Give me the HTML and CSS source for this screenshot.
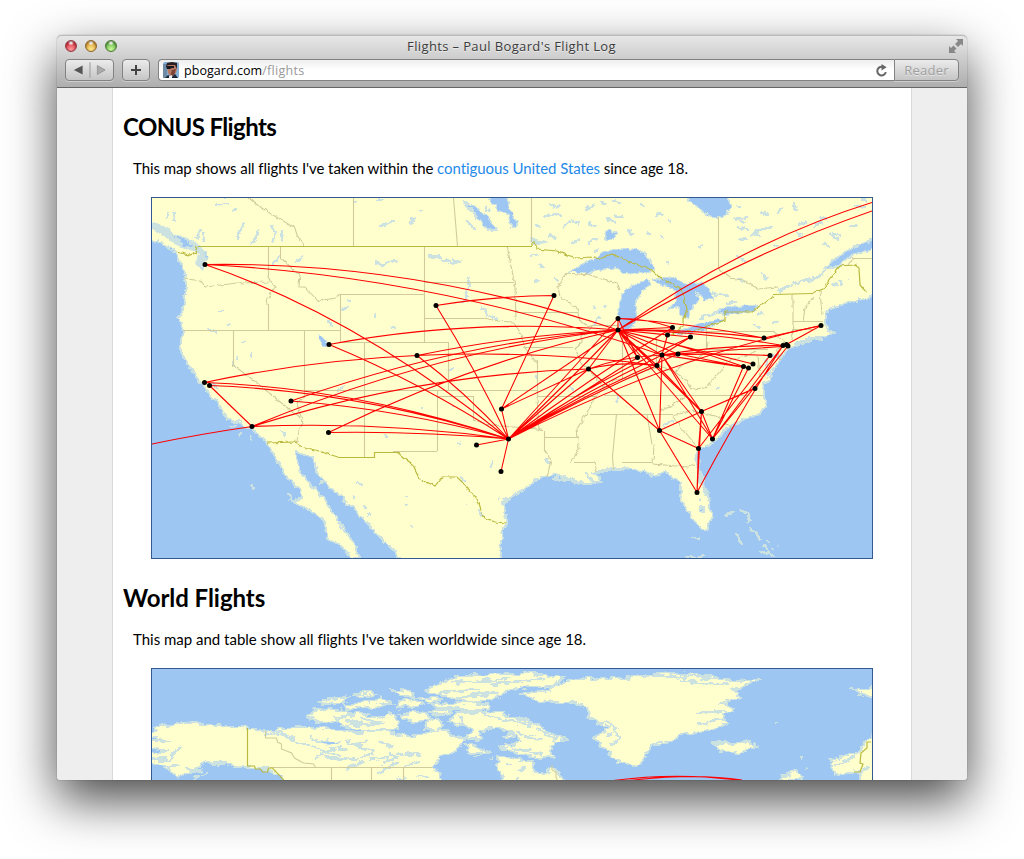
FILE: index.html
```
<!DOCTYPE html>
<html lang="en">
<head>
<meta charset="utf-8">
<title>Flights – Paul Bogard's Flight Log</title>
<link rel="stylesheet" href="styles.css">
</head>
<body>
<div class="window">
  <header class="chrome">
    <div class="titlebar">
      <div class="lights"><i class="light red"></i><i class="light amber"></i><i class="light green"></i></div>
      <div class="title"><span>Flights – Paul Bogard's Flight Log</span></div>
      <svg class="expand" viewBox="0 0 14 14"><path d="M7 0h7v7l-2-2-3 3-3-3 3-3zM0 7l2 2 2.500-2.500 3 3L5 12l2 2H0z"/></svg>
    </div>
    <div class="toolbar">
      <div class="button nav">
        <svg viewBox="0 0 48 20"><path class="back" d="M17 5.500v9L8 10z"/><path class="rule" d="M24.500 2v16"/><path class="fwd" d="M32 5.500v9l8-4.500z"/></svg>
      </div>
      <div class="button add"><svg viewBox="0 0 26 20"><path d="M13 5v10M8 10h10"/></svg></div>
      <div class="address">
        <svg class="favicon" viewBox="0 0 16 16"><rect width="16" height="16" rx="2" fill="#86b0d4"/><path d="M0 2h4v14H0z" fill="#6f8ba5"/><path d="M4 4q3-5 9-2l1 5-2 6-4 2-3-4z" fill="#b87863"/><path d="M9 8l4-1-2 6-4 2z" fill="#7a4436"/><path d="M3 4l1-3 5-1 5 1v6l-2-4-6 0z" fill="#2b1f20"/><path d="M3 4h8v2H9L7 7H4z" fill="#181820"/><path d="M2 16l3-3 4 2 3-3 3 4z" fill="#18263a"/><path d="M6 14l3-1v3H6z" fill="#eee"/></svg>
        <span class="host">pbogard.com</span><span class="path">/flights</span>
        <svg class="reload" viewBox="0 0 12 12"><path d="M8 3A4 4 0 1 0 10 7.500" fill="none" stroke="#666" stroke-width="1.900"/><path d="M6 0l4.800 3L6 6z" fill="#666"/></svg>
      </div>
      <div class="button reader">Reader</div>
    </div>
  </header>
  <main class="page">
    <article class="sheet">
      <h1 class="conus">CONUS Flights</h1>
      <p><span class="intro">This map shows all flights I've taken within the <a>contiguous United States</a> since age 18.</span></p>
      <svg class="map" viewBox="152 198 720 360" width="720" height="360">
        <defs>
          <filter id="rough" filterUnits="userSpaceOnUse" x="140" y="190" width="745" height="380"><feTurbulence type="fractalNoise" baseFrequency="0.14" numOctaves="3" seed="4" result="n"/><feDisplacementMap in="SourceGraphic" in2="n" scale="6" xChannelSelector="R" yChannelSelector="G"/></filter>
          <filter id="wobble" filterUnits="userSpaceOnUse" x="140" y="190" width="745" height="380"><feTurbulence type="fractalNoise" baseFrequency="0.2" numOctaves="2" seed="9" result="n"/><feDisplacementMap in="SourceGraphic" in2="n" scale="4" xChannelSelector="R" yChannelSelector="G"/></filter>
        </defs>
        <g filter="url(#rough)">
          <path class="land" d="M130 180H890V234L872 240 850 249 832 262 824 269 836 266 855 254 890 244V290L860 300 837 306 826 313 825 326 834 333 807 342 788 348 782 357 773 370 770 379 763 385 764 395 766 407 758 415 740 421 728 428 716 440 702 447 696 458 699 478 708 498 712 518 708 530 702 529 688 512 681 499 680 483 665 472 652 477 643 471 630 468 603 470 594 473 603 482 583 483 573 479 553 475 537 478 527 488 510 497 504 506 507 522 502 531 500 570H405L395 552 377 535 362 517 345 500 327 485 317 472 313 457 296 452 299 470 313 487 327 503 338 522 353 540 359 557 352 559 342 546 327 538 325 522 315 513 293 501 303 498 300 490 285 475 275 457 265 440 253 430 243 425 227 419 218 403 210 395 197 378 187 363 181 352 183 331 179 318 184 303 187 287 183 268 177 256 172 249 152 239 130 230z"/>
          <g class="water">
            <path d="M567 273L590 260 610 250 634 248 645 253 655 270 635 275 610 268 590 272z"/>
            <path d="M635 285L624 290 618 310 620 327 629 333 637 320 635 305 642 290 652 284 648 279z"/>
            <path d="M652 279L670 277 686 284 703 281 714 300 703 299 695 290 699 301 693 306 688 318 681 314 679 306 667 311 676 301 676 290 663 285z"/>
            <path d="M675 332L697 325 725 318 722 323 697 332 680 335zM717 313L725 307 757 305 755 311 727 315z"/>
            <path d="M683 195L700 210 713 218 727 215 731 206 726 195z"/>
            <path d="M486 195H506L509 206 518 224 511 229 508 214 497 208zM465 202L482 211 497 230 488 230 477 217z"/>
            <path d="M605 233l6-4 5 4-3 7-8-1zM318 335l4 2 7 7-4 2-6-6z"/>
            <path d="M700 507h4v4h-4zM204 250l4 8-6 9-4-6z"/>
          </g>
          <g class="shallow">
            <path d="M152 223L165 226 175 234 190 240 201 247 207 258 203 270 196 264 199 254 185 248 168 240 152 229z"/>
            <path d="M530 237l10 2 9 4-8 2-9 1zM698 455l3 15 4 15 4 8-5-2-7-20z"/>
          </g>
          <path class="water" d="M170 234L182 238 194 245 185 246z"/>
          <g class="lakes">
            <path d="M214 204h16m-11-8l6 2M243 222l-2 8-3 8M258 229l-3 13-5 3M271 224l4 9-2 10M280 230l3 12M231 212l5-2M166 219l3-8M174 221v-9M196 239l5-10m3 4v8M378 226l7-1 9-4M375 262l8 3 10-4M296 263l6-5M354 202h3M375 200h9"/>
            <path d="M272 266l6-8 2-2M347 301h3M327 321l6 3M342 309l6-1M375 312v5M392 325l3 4M219 311h5M227 325h4M207 329l12 3M241 344l4-4M238 356v5M251 351v6M233 367v-5M213 384l6 6M337 391l7-4M282 432l4 4M386 440v-6M421 408h3M451 407h3M457 443h3M492 462v5"/>
            <path d="M390 262l8-2M411 226l2-6-1-4M420 211h4M428 256l10 1 8 4 6 2 8-1M451 259l7 3M486 206v3M462 202l12 10m-8-7l11 13m-10 3l9 8m9-19l5 2M467 276l3 8-3 10-2 8-6 1M481 308l10 9 7 3M449 370h3"/>
            <path d="M544 217l10-3 8 2M550 205l7 2 4-3M563 228l9-8 9 3M584 209l11-3m5-4l7 2m6-3l8 2M586 224l11 2m9-7l10 3M548 234l8 4m15 6l8-5M535 226h6m47 16l9-4m-4 14l5-3M614 216l9 2m3 12l8 5M530 256l7-2m3 10l5 5m-11 12l6-1m14-2l4 4m37 46l2-8 3-2M593 307l3 2m7-3l4-1"/>
            <path d="M641 205h4m11 9l7 1m-16 17l4 2m18-13h2m31 23l-3 4m-33 15h4m-9-27l2 3M736 206h5m-7 13l12 4m-12-4l14-2m12-5l8 3m9-1l6-7m9-3l6 7m-60 16l10 4m3 5l9-7m-21 10l9 1m12-10l12-3m-18 5l6 5M774 247l6-2m-43 12l10 4m-9 18l8 3m14-9l7 6M795 232l9 3m-6-10l8-4m13-5l8 4m3 14l8 5m12-12l7-2m-34 19l7 2m3-13l7 3m15-31l10 3m-3-10l5 5m-54 24l8-5m-24 10l4 6m10-51l8 6"/>
            <path d="M778 291l8-4 9-3 10-4 12-2 9-7M699 319l8-4 10-2M712 293l17 3m-4 7l11-1M840 281l2 4m5-6h2m-16 7l4-2m-84 41l7 2m12-5h7m-22-6l6-3M780 359l-10-5-4 8m2-2l-1 15m4-4l-1 9m-3-8l6 4M793 344l19-6 11 2"/>
            <path d="M357 482l5 3m-7 14v-3m9 9l2 4m1 7l4-2M405 497h4m-4 8h3M465 505h2M411 527h2M466 482l-6-4M503 506l4-9M480 510l3 7m15-20v2M534 376l3 2M617 395v7m4 13h9M575 390l-7-3M637 437h1m-4 3v1M665 425l8-4m-8 4v3M716 388h4m-20 110v4M547 457l2 7M552 478l18 2 12 4 14-1-12-11m12 1l16-3 12-1"/>
            <path d="M228 426h9m-1-5h6m-3 14h2m9 2l3 2M252 485l2 5M288 493l3 8m17-19l7 8m5-6l3-4M700 538h-9"/>
            <path d="M725 514l9-1m6-3l8 2 2 8-4 4m3 5l8 5 3 6m2 5l6 6m4-3l3 3M736 533l6 12m-4-10l4 10M760 552l10 2 4 4m4-13h2m-11-2l-2-3M685 557h20"/>
          </g>
        </g>
        <g class="state">
          <path d="M353.500 198v48M453.500 198l4 48M531.500 198v44M280.500 246v12M424.500 246v96M424 282.500h90M340.500 294v48M340 294.500h84M183 330.500h157M340 342.500h108M233.500 330v35M304.500 330v68M364.500 342v115M304 390.500h233M448.500 342v48M424 318.500h60M516 312.500h62M523 347.500h50M592 325.500h26M622.500 332v48M537.500 360v37M437.500 390v61M393 451.500h44M437 396.500h36M473.500 396v24M537 396.500h60M544.500 431v20M544 437.500h35M574 462.500h21M590 414.500h83M616.500 414l-4 43 1 13M647 414.500l5 30M622 462.500h31M604 395.500h159M656.500 337v28M706.500 328v22M706 331.500h67M706 349.500h62M793 321.500h30M792 329.500h22M718.500 217v51M853 258.500h19M268.500 246v30M268.500 304v26"/>
          <g filter="url(#wobble)">
            <path d="M248 197l9 8 16 10 22 13 2 7 7 11M268 275l2 6 5 6-8 13 1 5M184 278l16 3 5 6 32-4 33-1M281 258l16 15 3 1-1 13h6l13 14 17-3 5-4M233 365l19 14 48 39M304 396l-7 7 6 20-5 7-1 13M484 318l13 3 16 1 7 10 5 16 12 15M507 246l5 24 3 17 1 33M566 273l-8 14 2 10 17 11 3 14 12 5-10 10v5l-7 6 7 17 8 5 7 10 7 7-10 12-5 10-12 20 2 19-8 15M595 462l2 10M566 273l24 2 27 8 3 7M473 420l17 5 23 2 24 2 7 2M537 397l2 33M544 450l7 10-4 17M654 444l-1 20 35 3 7-2M661 411l16-9 11-6M673 416l19-6 26 7 14 11M673 417l25 31M604 389l10-9 15-2 12-6 18-5 16 5 8-8 15-6 8-8 2-8M675 372l12 9 4 8 15-1 10-12 13-15 16-5 10-5M773 331l12 11-8 8 3 10M793 294v28l-1 18M813 297l-8 11-2 14M820 290l2 25M718 268l12 10 13 2 15 9 20-2M838 266l10-1 5-7M758 356l2 20 8 2"/>
          </g>
        </g>
        <g class="nation">
          <path d="M198 246.500h334M338 457.500h36.500v-5H397M773 294.500l40-1"/>
          <g filter="url(#wobble)"><path d="M176 252l14 3 5-2 2-7M532 246v-4l3 0 2 7 20 2 10 4 10 3 13-1 10 2 12-5 20 9 20 7 7 7 10 6 10 4 4 7 4 16-4 9v7l-10 8 24-4 28-10v-8h27l21-16M813 293l10-4 7-11 10-12 15-1 4 3 1 17 6 7M267 443l28-1 3 3 40 12M397 452l16 13 7 14 15 7 7-9 15 0 10 10 12 16 4 14 12 5 12 1"/></g>
        </g>
        <g class="route">
          <path d="M205 264.500Q411 261 618 330M205 264.500Q433 276 662 355M205 264.500Q357 316 508.500 439M329 344.500Q470 318 618 330M329 344.500Q420 382 508.500 439M204.500 382.500Q310 360 417 355.500M204.500 382.500Q356 388 508.500 439M209.500 385.500Q359 391 508.500 439M209.500 385.500L252 426.500M252 426.500Q435 350 618 330M252 426.500Q420 374 588.500 369M252 426.500Q380 421 508.500 439M152 444Q200 434 252 426.500M328.500 432.500Q418 431 508.500 439M328.500 432.500Q473 362 618 330M291 401Q455 343 618 330M291 401Q400 409 508.500 439"/>
          <path d="M417 355.500Q515 335 618 330M417 355.500Q540 350 657 365.500M417 355.500Q464 391 508.500 439M436 305.500Q494 296 554 295.500M436 305.500Q475 368 508.500 439M554 295.500L501.500 409M501.500 409L508.500 439M501.500 409L618 330M501.500 409L588.500 369M508.500 439L476.500 445M508.500 439L501 471.500M508.500 439L618 318.500M508.500 439Q566 384 618 330M508.500 439L588.500 369M508.500 439L637.500 357.500M508.500 439Q585 392 662 355M508.500 439Q584 397 657 365.500M508.500 439Q590 391 678 354M508.500 439Q590 378 672.500 327.500M508.500 439Q600 378 690.500 337M508.500 439Q665 359 821 325.500"/>
          <path d="M618 330Q745 242 872 202.500M618 330Q745 255 872 211M618 318.500V330M618 318.500Q645 318 672.500 327.500M618 330L672.500 327.500M618 330L667.500 335M618 330L690.500 337M618 330Q690 329 764 338M618 318.500Q690 323 764 338M618 330Q700 331 783 345.500M618 330L662 355M618 330L657 365.500M618 330L678 354M618 330L637.500 357.500M618 330Q680 344 743.500 366.500M618 330L753 364M618 330L701.500 411.500M618 330L659.500 430.500M618 330L712.500 439M618 330L588.500 369M618 318.500L637.500 357.500"/>
          <path d="M588.500 369Q620 361 657 365.500M588.500 369L659.500 430.500M588.500 369Q620 357 662 355M662 355L667.500 335 672.500 327.500M662 355L690.500 337M662 355Q720 345 783 345.500M662 355Q717 353 770 355.500M662 355L743.500 366.500M662 355L748.500 368M678 354L748.500 368M662 355L788 346M662 355L659.500 430.500M657 365.500L662 355M657 365.500L701.500 411.500M662 355L701.500 411.500M662 355L712.500 439M821 325.500L764 338M821 325.500L786.500 344.500M783 345.500L712.500 439M788 346L712.500 439M770 355.500L698.500 448.500M783 345.500Q742 408 697 492.500M743.500 366.500L712.500 439M748.500 368L712.500 439M755 388.500L701.500 411.500M753 389L701.500 411.500M701.500 411.500L659.500 430.500M701.500 411.500L712.500 439M701.500 411.500L698.500 448.500M701.500 411.500L697 492.500M659.500 430.500L698.500 448.500M659.500 430.500L697 492.500M698.500 448.500L697 492.500"/>
        </g>
        <path class="airport" d="M205 264.500h0M329 344.500h0M436 305.500h0M554 295.500h0M417 355.500h0M618 318.500h0M618 330h0M588.500 369h0M204.500 382.500h0M209.500 385.500h0M291 401h0M252 426.500h0M328.500 432.500h0M501.500 409h0M508.500 439h0M476.500 445h0M501 471.500h0M821 325.500h0M672.500 327.500h0M667.500 335h0M690.500 337h0M662 355h0M678 354h0M637.500 357.500h0M657 365.500h0M764 338h0M783 345.500h0M786.500 344.500h0M788 346h0M770 355.500h0M743.500 366.500h0M748.500 368h0M753 364h0M755 388.500h0M701.500 411.500h0M659.500 430.500h0M698.500 448.500h0M712.500 439h0M697 492.500h0"/>
      </svg>
      <h1 class="world">World Flights</h1>
      <p><span class="intro2">This map and table show all flights I've taken worldwide since age 18.</span></p>
      <svg class="map" viewBox="152 669 720 360" width="720" height="360">
        <defs><filter id="rough2" filterUnits="userSpaceOnUse" x="140" y="660" width="745" height="140"><feTurbulence type="fractalNoise" baseFrequency="0.09 0.2" numOctaves="3" seed="7" result="n"/><feDisplacementMap in="SourceGraphic" in2="n" scale="8" xChannelSelector="R" yChannelSelector="G"/></filter></defs>
        <g filter="url(#rough2)">
          <path class="land" d="M140 733L152 731 162 726 185 722 217 726 243 727 265 731 300 727 327 728 357 733 383 731 410 736 424 733 440 728 452 735 465 740 457 750 440 757 433 767 440 775 442 795H286L281 778 270 770 250 767 230 765 207 762 193 770 177 778 170 769 152 763 140 760z"/>
          <path class="land" d="M308 718L313 710 337 709 350 713 335 722 320 722zM335 718L357 713 380 718 388 713 396 716 398 729 363 731 342 727zM320 702l20-5 11 1-12 5-17 1zM344 705l30-4 6-3 11 5-9 3-36 3zM352 695l20-4 4 3-15 2zM390 690l20 2 8 5-18-2zM398 702l16-3 8 5-10 3-14 1zM400 715l14-4 12 2 6 6-12 2-16-1zM426 722l10-4 7 6-6 6-12-2zM428 712l16-2 8 1-12 5zM432 704l40-1 20 3-4 4-50-1zM425 690l15-7 18-7 75-3 30 4-10 9-41 3-17 10-24 4-14-4-16-4zM418 697l24 2-14 4z"/>
          <path class="land" d="M450 720L457 712 503 713 520 719 537 725 548 732 566 740 550 745 553 757 538 757 523 755 498 748 520 742 512 733 500 728 481 730 480 740 464 738 473 730 468 726 456 725zM466 744l18 5 6 4-22 0zM474 757l8-1M490 758h3M502 736l8-2 2 3-8 1z"/>
          <path class="land" d="M498 757L512 758 533 762 535 772 544 774 553 767 567 783V795H505L503 777 497 770z"/>
          <path class="land" d="M519 693L545 691 563 682 590 678 620 679 635 677 663 673 710 675 725 681 762 680 733 690 740 698 727 703 735 709 723 714 726 724 710 731 680 735 669 742 652 745 640 763 632 767 617 760 603 748 595 737 608 727 590 720 587 708 570 702 540 702z"/>
          <path class="land" d="M713 743L720 741 727 745 747 741 757 746 740 753 720 750zM890 730L872 735 857 752 830 760 834 773 843 775 858 770 862 785H890zM853 690l22-2v9l-15-3zM781 776l17-5 5 6-8 3-14 1zM775 723h3M801 758h2M805 767h2"/>
          <g class="lakes">
            <path d="M263 735l18-3 12 8 20 8M275 734l20 4M310 737l10 6 22-2M316 757l12-5 14 4m-28-7l14 2 12-4m-15 11l18 1M335 748l15 2m-4-9l16 6m-22 13l17-3M356 745l12-5m-6 8l14 3m-15 6l14-4m-6 6l20-2m-10-14l12 4m3 11l-12 5m-1-20l12 3m-47 23l18-7m20-19l10 3m-5 8l9 4"/>
            <path d="M395 753l10 2m-14 10l8-2m6 3l12-4m-11-8l15 2m-7 8l7-3m-24 18l8-1m13-2l10 2M383 769l8-2m-13 5l9-3M506 765l6-1m8 5l5 1m-10 9l3-2M180 748l-8 8-2 4-18-1M150 741l20 0M150 751l18 0M166 768l14-3m5 3l18 3m-10 8l15-5M207 763l20-1"/>
            <path d="M345 725l40-2M360 718l24 5M345 720l25 5M440 692l40-3m-30-6l60-4m-20 5l55-5M450 698l50-5M460 717l2 7m20-9l50 10m5 4l20 11m-40-7l25 7m-30 8l30 6M608 720l8 10 3 7-8 10M595 725l15-4m-5 12l10 1m-6 10l8-1M696 713l30-2m-28 13l27-5m-8-15l17-4M652 676l65 2m-40 2l50 5M715 744l14-1M834 765l22-9m0 18l12-6"/>
          </g>
          <path class="water" d="M318 742l10-2 10 1-8 4-8-2zM349 760l12-1-8 3zM152 737l12 3-12 0zM152 748l12 2-5 4-7-1z"/>
        </g>
        <path class="state" d="M270 767.500h162M331.500 768v30M371.500 768v30M403.500 768v30M265.500 731v7h11l1 4 4 2v5l10 4 3 5 9 5 10 1 2 3M552 765v5l4 2v5l2 5"/>
        <path class="nation" d="M247.500 728v38h7l1 3 5 0 2 3h5l1-4h4l13 14M871 742h-4v6l-6 5-1 10 3 1-3 8-6 0"/>
        <path class="route" d="M610 781Q680 771 752 782M618 782Q690 772 742 780"/>
      </svg>
    </article>
  </main>
</div>
</body>
</html>
```
FILE: styles.css
```
html, body { height: 100%; }
body { margin: 0; padding: 35px 57px 79px; box-sizing: border-box; overflow: hidden; background: #fff; }
.window { display: flex; flex-direction: column; height: 745px; border-radius: 5px 5px 2px 2px; box-shadow: 0 20px 50px rgba(0,0,0,.72), 0 0 1px #555; background: #eee; }
.chrome { height: 53px; box-sizing: border-box; flex: none; border-bottom: 1px solid #666; border-top: 1px solid #bbb; border-radius: 5px 5px 0 0; background: linear-gradient(#e7e7e7, #ccc 45%, #aeaeae); font-family: "Open Sans", "Noto Sans", sans-serif; }
.titlebar { display: flex; align-items: center; height: 20px; padding: 0 4px 0 8px; margin-bottom: 2px; }
.lights { display: flex; gap: 8px; width: 66px; }
.light { width: 12px; height: 12px; box-sizing: border-box; border-radius: 50%; border: 1px solid #777; box-shadow: inset 0 1px 2px rgba(0,0,0,.45); }
.red { background: radial-gradient(circle at 50% 15%, #fff 8%, transparent 32%), radial-gradient(circle at 50% 85%, #ff9ca0, #db3543 70%); border-color: #923942; }
.amber { background: radial-gradient(circle at 50% 15%, #fff 8%, transparent 32%), radial-gradient(circle at 50% 85%, #ffee90, #dda039 70%); border-color: #8d6428; }
.green { background: radial-gradient(circle at 50% 15%, #fff 8%, transparent 32%), radial-gradient(circle at 50% 85%, #cdff9d, #68b64a 70%); border-color: #4b7a33; }
.title { flex: 1; text-align: center; font-size: 13px; line-height: 20px; letter-spacing: .37px; color: #3c3c3c; text-shadow: 0 1px rgba(255,255,255,.5); padding-right: 57px; white-space: nowrap; }
.expand { width: 14px; height: 14px; fill: #888; }
.toolbar { display: flex; padding: 1px 8px 0; }
.button { box-sizing: border-box; height: 22px; border: 1px solid #828282; border-radius: 4px; background: linear-gradient(#ececec, #c5c5c5); box-shadow: 0 1px rgba(255,255,255,.35); }
.button svg { display: block; height: 20px; }
.nav { width: 49px; margin-right: 8px; }
.nav svg { width: 47px; }
.back { fill: #555; }
.fwd { fill: #aaa; stroke: #888; stroke-width: .7; }
.rule { stroke: #999; }
.add { width: 28px; margin-right: 8px; }
.add path { stroke: #444; stroke-width: 2; }
.address { flex: 1; display: flex; align-items: center; box-sizing: border-box; height: 22px; padding: 0 6px 0 4px; border: 1px solid #828282; border-right: 0; border-radius: 4px 0 0 4px; background: linear-gradient(#eee, #fff 50%); font-size: 12.500px; color: #000; }
.favicon { width: 16px; height: 16px; margin-right: 5px; }
.host { letter-spacing: .05px; }
.path { color: #999; letter-spacing: .3px; }
.reload { width: 13px; height: 13px; margin-left: auto; }
.reader { width: 65px; border-radius: 0 4px 4px 0; font-size: 13px; line-height: 20px; letter-spacing: .2px; text-align: center; color: #a0a0a0; text-shadow: 0 1px rgba(255,255,255,.5); }
.page { flex: 1; min-height: 0; overflow: hidden; display: flex; justify-content: center; border-radius: 0 0 2px 2px; }
.sheet { width: 798px; height: 1000px; background: #fff; border: solid #d9d9d9; border-width: 0 1px; font-family: Lato, "Open Sans", sans-serif; color: #000; }
h1 { margin: 0; padding: 22px 0 0 10px; height: 50px; box-sizing: border-box; font-size: 24px; line-height: 34px; font-weight: 700; white-space: nowrap; }
.conus { letter-spacing: -.62px; }
.world { letter-spacing: -.05px; }
p { margin: 0; height: 59px; padding: 20px 0 0 20px; box-sizing: border-box; font-size: 15px; line-height: 21px; white-space: nowrap; }
.intro { letter-spacing: -.075px; }
.intro2 { letter-spacing: -.005px; }
a { color: #1e8ae8; }
.map { display: block; margin: 0 0 0 38px; border: 1px solid #35598f; background: #9ec6f3; }
.land { fill: #ffffce; stroke: #cce2e1; stroke-width: 2; shape-rendering: crispEdges; }
.water path, path.water { fill: #9ec6f3; stroke: #cce2e1; stroke-width: 1.200; shape-rendering: crispEdges; }
.shallow { fill: #cce2e1; }
.lakes { fill: none; stroke: #cce2e1; stroke-width: 2.500; shape-rendering: crispEdges; }
.state { fill: none; stroke: #d1cb9c; stroke-width: 1.100; }
.nation { fill: none; stroke: #b9b93e; stroke-width: 1.200; }
.route { fill: none; stroke: #f00; stroke-width: 1.100; }
.airport { fill: none; stroke: #000; stroke-width: 5; stroke-linecap: round; }
```
